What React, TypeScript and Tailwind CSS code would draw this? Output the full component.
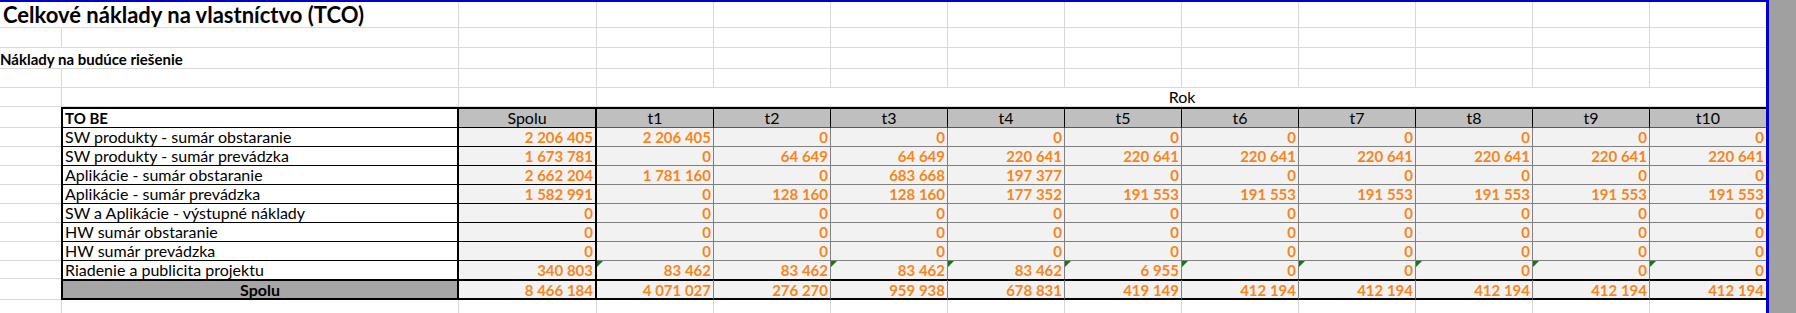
const font = { fontFamily: 'Lato, "Open Sans", sans-serif' };

const tCols = ['t1', 't2', 't3', 't4', 't5', 't6', 't7', 't8', 't9', 't10'];

const rows: { label: string; values: string[] }[] = [
  { label: 'SW produkty - sumár obstaranie', values: ['2 206 405', '2 206 405', '0', '0', '0', '0', '0', '0', '0', '0', '0'] },
  { label: 'SW produkty - sumár prevádzka', values: ['1 673 781', '0', '64 649', '64 649', '220 641', '220 641', '220 641', '220 641', '220 641', '220 641', '220 641'] },
  { label: 'Aplikácie - sumár obstaranie', values: ['2 662 204', '1 781 160', '0', '683 668', '197 377', '0', '0', '0', '0', '0', '0'] },
  { label: 'Aplikácie - sumár prevádzka', values: ['1 582 991', '0', '128 160', '128 160', '177 352', '191 553', '191 553', '191 553', '191 553', '191 553', '191 553'] },
  { label: 'SW a Aplikácie - výstupné náklady', values: ['0', '0', '0', '0', '0', '0', '0', '0', '0', '0', '0'] },
  { label: 'HW sumár obstaranie', values: ['0', '0', '0', '0', '0', '0', '0', '0', '0', '0', '0'] },
  { label: 'HW sumár prevádzka', values: ['0', '0', '0', '0', '0', '0', '0', '0', '0', '0', '0'] },
];

const riadenie = ['340 803', '83 462', '83 462', '83 462', '83 462', '6 955', '0', '0', '0', '0', '0'];
const spolu = ['8 466 184', '4 071 027', '276 270', '959 938', '678 831', '419 149', '412 194', '412 194', '412 194', '412 194', '412 194'];

// green error marks in "Riadenie" row (t columns)
const marks = [true, false, true, true, true, true, true, true, true, true];

const nb = (s: string) => s.replace(/ /g, '\u00a0');

function GridRow({ h, merged }: { h: string; merged?: 'rok' }) {
  return (
    <div className={`flex ${h}`}>
      <div className="w-[62px] shrink-0 border-r border-b border-[#d9d9d9]" />
      <div className="w-[397px] shrink-0 border-r border-b border-[#d9d9d9]" />
      <div className="w-[138px] shrink-0 border-r border-b border-[#d9d9d9]" />
      {merged === 'rok' ? (
        <div className="w-[1170px] shrink-0 border-b border-[#d9d9d9] flex items-end justify-center text-[16px] leading-[18px] text-black">
          Rok
        </div>
      ) : (
        tCols.map((t) => <div key={t} className="w-[117px] shrink-0 border-r border-b border-[#d9d9d9]" />)
      )}
    </div>
  );
}

function NumCell({ v, spoluCol }: { v: string; spoluCol?: boolean }) {
  return (
    <div
      className={
        spoluCol
          ? 'w-[138px] shrink-0 bg-[#f2f2f2] border-r-2 border-b border-r-black border-b-black px-[2px] text-right'
          : 'w-[117px] shrink-0 bg-[#f2f2f2] border-r border-b border-[#808080] px-[2px] text-right'
      }
    >
      <span className="font-bold text-[15px] text-[#f7861c]">{nb(v)}</span>
    </div>
  );
}

export default function App() {
  return (
    <div className="w-[1796px] h-[313px] flex overflow-hidden bg-white text-black" style={font}>
      <div className="w-[1769px] shrink-0 border-t-2 border-r-[3px] border-[#0000cc] overflow-hidden">
        <div className="w-[1767px] text-[16px] leading-[18px]">
          {/* row 1 - title */}
          <div className="flex h-[26px]">
            <div className="w-[459px] shrink-0 border-r border-b border-[#d9d9d9] pl-[3px] flex items-end">
              <span className="font-bold text-[22px] leading-[25px] whitespace-nowrap">Celkové náklady na vlastníctvo (TCO)</span>
            </div>
            <div className="w-[138px] shrink-0 border-r border-b border-[#d9d9d9]" />
            {tCols.map((t) => <div key={t} className="w-[117px] shrink-0 border-r border-b border-[#d9d9d9]" />)}
          </div>
          <GridRow h="h-[20px]" />
          {/* row 3 - subtitle */}
          <div className="flex h-[21px]">
            <div className="w-[459px] shrink-0 border-r border-b border-[#d9d9d9] flex items-end">
              <span className="font-bold text-[15px] whitespace-nowrap">Náklady na budúce riešenie</span>
            </div>
            <div className="w-[138px] shrink-0 border-r border-b border-[#d9d9d9]" />
            {tCols.map((t) => <div key={t} className="w-[117px] shrink-0 border-r border-b border-[#d9d9d9]" />)}
          </div>
          <GridRow h="h-[19px]" />
          <GridRow h="h-[19px]" merged="rok" />

          {/* table header */}
          <div className="flex h-[21px]">
            <div className="w-[61px] shrink-0 border-b border-[#d9d9d9]" />
            <div className="w-[398px] shrink-0 border-l-2 border-t-2 border-r-2 border-b border-black px-[2px] font-bold text-[15px]">TO BE</div>
            <div className="w-[138px] shrink-0 bg-[#bfbfbf] border-t-2 border-r-2 border-b border-black text-center">Spolu</div>
            {tCols.map((t) => (
              <div key={t} className="w-[117px] shrink-0 bg-[#bfbfbf] border-t-2 border-t-black border-r border-r-black border-b border-b-[#595959] text-center">
                {t}
              </div>
            ))}
          </div>

          {rows.map((r) => (
            <div key={r.label} className="flex h-[19px]">
              <div className="w-[61px] shrink-0 border-b border-[#d9d9d9]" />
              <div className="w-[398px] shrink-0 border-l-2 border-r-2 border-b border-black px-[2px] whitespace-nowrap">{r.label}</div>
              <NumCell v={r.values[0]} spoluCol />
              {r.values.slice(1).map((v, i) => <NumCell key={i} v={v} />)}
            </div>
          ))}

          <div className="flex h-[18px]">
            <div className="w-[61px] shrink-0 border-b border-[#d9d9d9]" />
            <div className="w-[398px] shrink-0 border-l-2 border-r-2 border-black px-[2px]">Riadenie a publicita projektu</div>
            <div className="w-[138px] shrink-0 bg-[#f2f2f2] border-r-2 border-black px-[2px] text-right">
              <span className="font-bold text-[15px] text-[#f7861c]">{nb(riadenie[0])}</span>
            </div>
            {riadenie.slice(1).map((v, i) => (
              <div key={i} className="relative w-[117px] shrink-0 bg-[#f2f2f2] border-r border-[#808080] px-[2px] text-right">
                {marks[i] && (
                  <div className="absolute left-0 top-0 w-0 h-0 border-t-[6px] border-r-[6px] border-t-[#107c10] border-r-transparent" />
                )}
                <span className="font-bold text-[15px] text-[#f7861c]">{nb(v)}</span>
              </div>
            ))}
          </div>

          {/* total */}
          <div className="flex h-[21px]">
            <div className="w-[61px] shrink-0 border-b border-[#d9d9d9]" />
            <div className="w-[398px] shrink-0 bg-[#a6a6a6] border-l-2 border-t-2 border-r-2 border-b-2 border-black text-center font-bold">Spolu</div>
            <div className="w-[138px] shrink-0 bg-[#f2f2f2] border-t-2 border-r-2 border-b-2 border-black px-[2px] text-right">
              <span className="font-bold text-[15px] text-[#f7861c]">{nb(spolu[0])}</span>
            </div>
            {spolu.slice(1).map((v, i) => (
              <div key={i} className="w-[117px] shrink-0 bg-[#f2f2f2] border-t-2 border-b-2 border-t-black border-b-black border-r border-r-[#808080] px-[2px] text-right">
                <span className="font-bold text-[15px] text-[#f7861c]">{nb(v)}</span>
              </div>
            ))}
          </div>

          <GridRow h="h-[20px]" />
        </div>
      </div>
      <div className="flex-1 bg-[#a0a0a0]" />
    </div>
  );
}
